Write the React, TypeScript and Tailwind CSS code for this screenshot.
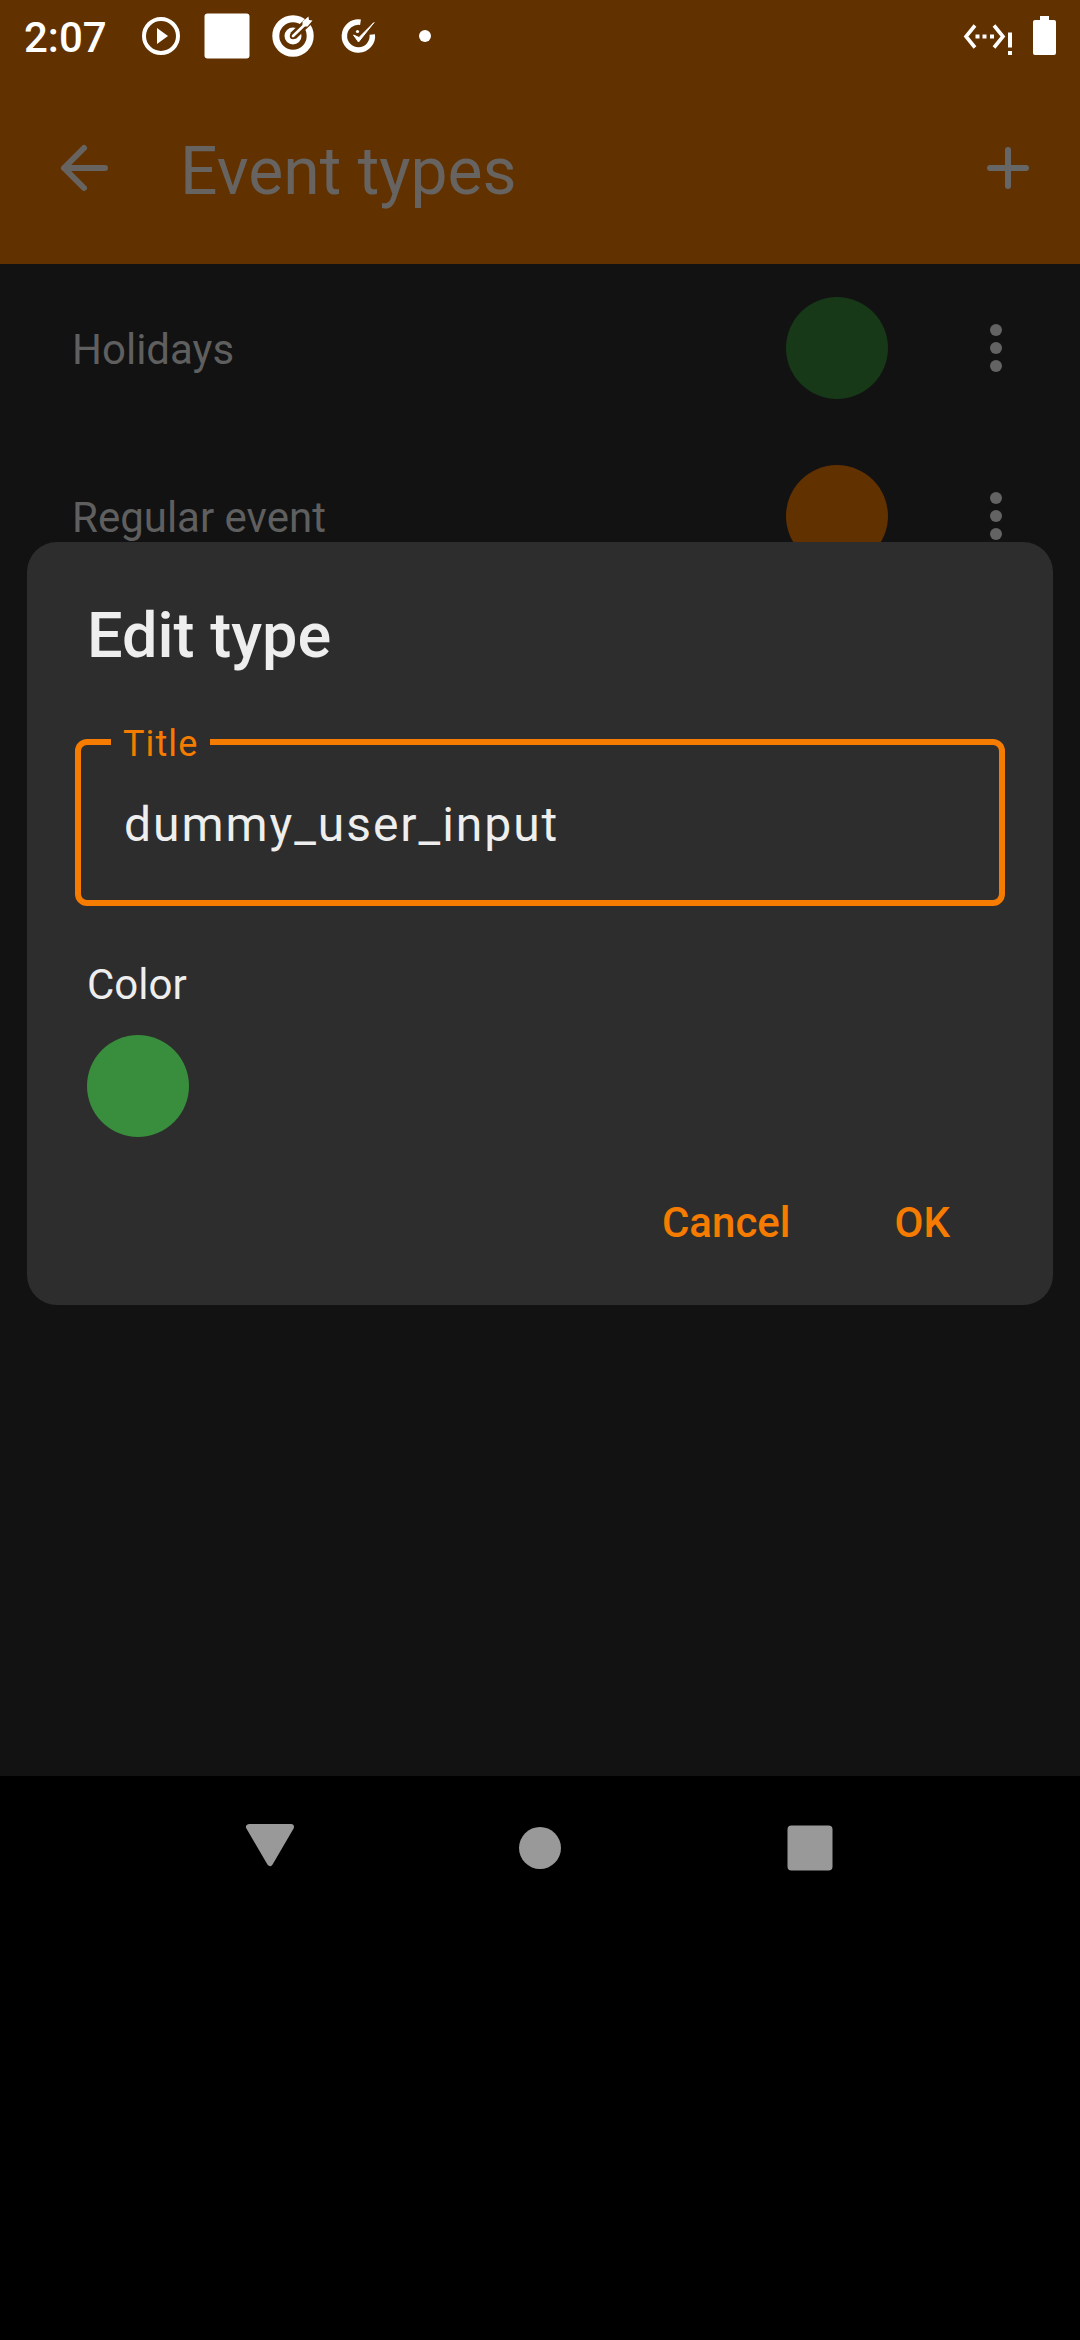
import React from "react";

function StatusBar() {
  return (
    <div className="flex h-[72px] items-center justify-between">
      <div className="flex h-[72px] items-center">
        <span className="w-[118px] pl-6 pt-[3px] text-[42px] font-medium leading-[72px] text-white">2:07</span>
        <svg className="h-[72px] w-[320px]" viewBox="118 0 320 72" fill="none">
          <circle cx="161" cy="36" r="17" stroke="#fff" strokeWidth="4" />
          <path d="M157 28v16l11-8z" fill="#fff" />
          <rect x="204.5" y="13.5" width="45" height="45" rx="3" fill="#fff" />
          <circle cx="293" cy="36" r="17.2" stroke="#fff" strokeWidth="7" />
          <circle cx="293" cy="36" r="8.5" fill="#fff" />
          <path d="M293 36L312 18" stroke="#613100" strokeWidth="8" />
          <circle cx="293" cy="36" r="3.2" fill="#613100" />
          <path d="M293 36L306 23.5" stroke="#fff" strokeWidth="2.6" strokeLinecap="round" />
          <path d="M302.5 26.5v-5l6-5 .5 3.5 3.5.5-5 6z" fill="#fff" />
          <path d="M360.5 22.2A14 14 0 1 0 372.3 34.5" stroke="#fff" strokeWidth="5.5" />
          <path d="M353.5 35l5 7L374 22.5 359 37.500z" fill="#fff" stroke="#fff" strokeWidth="1" />
          <circle cx="357.5" cy="31.5" r="1.6" fill="#fff" />
          <circle cx="425" cy="36" r="6" fill="#fff" />
        </svg>
      </div>
      <svg className="h-[72px] w-[120px]" viewBox="960 0 120 72" fill="none">
        <path d="M975 25.5L966 36.5l9 11M994 25.5l9 11-9 11" stroke="#fff" strokeWidth="3.6" />
        <path d="M975.5 34.5h4v4h-4zM982.5 34.5h4v4h-4zM990 34.5h4v4h-4zM1008 32.5h4v15h-4zM1008 51h4v4h-4z" fill="#fff" />
        <path d="M1040 16h9v4h5a2 2 0 0 1 2 2v31a2 2 0 0 1-2 2h-19a2 2 0 0 1-2-2V22a2 2 0 0 1 2-2h5z" fill="#fff" />
      </svg>
    </div>
  );
}

function AppBar() {
  return (
    <div className="flex h-[192px] items-center">
      <svg className="ml-[48px] h-[72px] w-[72px]" viewBox="48 132 72 72" fill="none" stroke="#666360" strokeWidth="6" strokeLinecap="round" strokeLinejoin="round">
        <path d="M84 148L64 168l20 20M64 168h41" />
      </svg>
      <h1 className="ml-[60px] grow pt-[8px] text-[66px] leading-[80px] text-[#666360]">Event types</h1>
      <svg className="mr-[36px] h-[72px] w-[72px]" viewBox="0 0 72 72" stroke="#666666" strokeWidth="6" strokeLinecap="round">
        <path d="M18 36h36M36 18v36" />
      </svg>
    </div>
  );
}

function EventRow({ title, swatch }: { title: string; swatch: string }) {
  return (
    <li className="flex h-[168px] items-center pl-[72px] pr-[78px]">
      <span className="grow pt-[3px] text-[42px] leading-[50px] text-[#5f5f5f]">{title}</span>
      <span className={`h-[102px] w-[102px] rounded-full ${swatch}`} />
      <span className="ml-[102px] flex flex-col gap-[6px]">
        <span className="size-3 rounded-full bg-[#636363]" />
        <span className="size-3 rounded-full bg-[#636363]" />
        <span className="size-3 rounded-full bg-[#636363]" />
      </span>
    </li>
  );
}

function EditTypeDialog() {
  return (
    <div role="dialog" className="absolute left-[27px] top-[542px] flex h-[763px] w-[1026px] flex-col rounded-[30px] bg-[#2d2d2d] text-[#eeeeee]">
      <h2 className="ml-[60px] mt-[54px] h-[80px] text-[63px] font-medium leading-[80px]">Edit type</h2>
      <fieldset className="mx-[48px] mt-[45px] h-[185px] rounded-[12px] border-[6px] border-[#f57c00] pl-[30px]">
        <legend className="h-[42px] px-3 pt-[2px] text-[36px] leading-[42px] tracking-[1.1px] text-[#f57c00]">Title</legend>
        <div className="ml-[13px] mt-[32px] text-[48px] leading-[60px] tracking-[1.95px]">dummy_user_input</div>
      </fieldset>
      <div className="ml-[60px] mt-[54px] h-[50px] text-[42px] leading-[50px]">Color</div>
      <span className="ml-[60px] mt-[25px] size-[102px] rounded-full bg-[#388e3c]" />
      <div className="mt-[61px] flex justify-end gap-[104px] pr-[103px] text-[42px] font-medium leading-[50px] text-[#f57c00]">
        <button>Cancel</button>
        <button>OK</button>
      </div>
    </div>
  );
}

function NavigationBar() {
  return (
    <nav className="flex h-[564px] items-start justify-between bg-black px-[234px] pt-[36px]">
      <svg className="size-[72px]" viewBox="0 0 72 72" fill="#999" stroke="#999" strokeWidth="6" strokeLinejoin="round">
        <path d="M15 15h42L36 51z" />
      </svg>
      <svg className="size-[72px]" viewBox="0 0 72 72" fill="#999">
        <circle cx="36" cy="36" r="21" />
      </svg>
      <svg className="size-[72px]" viewBox="0 0 72 72" fill="#999">
        <rect x="13.5" y="13.5" width="45" height="45" rx="4" />
      </svg>
    </nav>
  );
}

export default function App() {
  return (
    <div className="relative h-[2340px] w-[1080px] overflow-hidden bg-[#121212] font-['Roboto',sans-serif]">
      <header className="h-[264px] bg-[#613100]">
        <StatusBar />
        <AppBar />
      </header>
      <ul className="h-[1512px]">
        <EventRow title="Holidays" swatch="bg-[#173918]" />
        <EventRow title="Regular event" swatch="bg-[#613100]" />
      </ul>
      <NavigationBar />
      <EditTypeDialog />
    </div>
  );
}
